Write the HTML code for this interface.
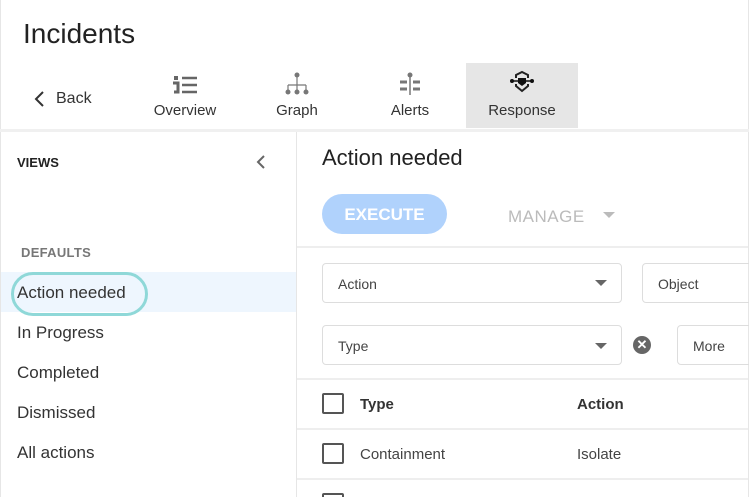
<!DOCTYPE html>
<html><head><style>
*{margin:0;padding:0;box-sizing:border-box}
html,body{width:749px;height:497px;overflow:hidden}
body{background:#fff;font-family:"Liberation Sans",sans-serif;color:#333;position:relative}
.a{position:absolute}
.tab{position:absolute;top:63px;height:65px;text-align:center;font-size:15px;color:#333}
.tab span{position:absolute;left:0;right:0;top:39px}
.box{position:absolute;border:1px solid #ddd;border-radius:4px;height:40px;font-size:14px;color:#444;padding:12px 15px}
.caret{position:absolute;width:0;height:0;border-left:6px solid transparent;border-right:6px solid transparent;border-top:6px solid #666}
.cb{position:absolute;width:22px;height:21px;border:2px solid #555;border-radius:2px}
.hl{position:absolute;left:297px;right:1px;height:2px;background:#eee}
.s{position:absolute;left:17px;font-size:17px;color:#333}
</style></head><body>
<div class="a" style="left:0;top:0;width:1px;height:497px;background:#e6e6e6"></div>
<div class="a" style="left:748px;top:0;width:1px;height:497px;background:#e6e6e6"></div>
<div class="a" style="left:23px;top:18px;font-size:28px;color:#222">Incidents</div>
<svg class="a" style="left:33px;top:91px" width="12" height="16"><path d="M10 1L3 8l7 7" stroke="#333" stroke-width="2" fill="none"/></svg>
<div class="a" style="left:56px;top:90px;font-size:16px;color:#333">Back</div>
<div class="tab" style="left:140px;width:90px"><svg style="margin-top:12px" width="28" height="20"><rect x="3" y="1" width="4" height="4" fill="#666"/><path d="M2 8h5v9h-4" stroke="#666" stroke-width="3" fill="none"/><path d="M11 3h15M11 10h15M11 17h15" stroke="#666" stroke-width="2.5"/></svg><span>Overview</span></div>
<div class="tab" style="left:252px;width:90px"><svg style="margin-top:8px" width="28" height="26"><circle cx="14" cy="4" r="2.5" fill="#777"/><path d="M14 6v8M5 14h18M5 14v5M14 14v5M23 14v5" stroke="#777" stroke-width="1.2" fill="none"/><circle cx="5" cy="21" r="2.5" fill="#777"/><circle cx="14" cy="21" r="2.5" fill="#777"/><circle cx="23" cy="21" r="2.5" fill="#777"/></svg><span>Graph</span></div>
<div class="tab" style="left:365px;width:90px"><svg style="margin-top:9px" width="28" height="24"><circle cx="14" cy="3" r="2.5" fill="#777"/><path d="M14 3v20" stroke="#777" stroke-width="1.5"/><path d="M4 10h7M4 17h7M17 10h7M17 17h7" stroke="#777" stroke-width="3"/></svg><span>Alerts</span></div>
<div class="tab" style="left:466px;width:112px;background:#e6e6e6"><svg style="margin-top:6px" width="30" height="28"><path d="M9 9V6l6-3 6 3v3M9 15v2l6 5 6-5v-2" stroke="#222" stroke-width="2" fill="none"/><path d="M11 9h8v5l-4 3-4-3z" fill="#111"/><circle cx="5" cy="12" r="2" fill="#111"/><circle cx="25" cy="12" r="2" fill="#111"/><path d="M5 12h6M19 12h6" stroke="#111" stroke-width="1.5"/></svg><span>Response</span></div>
<div class="a" style="left:0;top:129px;width:749px;height:3px;background:#f0f0f0"></div>
<div class="a" style="left:296px;top:132px;width:1px;height:365px;background:#e6e6e6"></div>
<div class="a" style="left:17px;top:155px;font-size:13px;font-weight:bold;color:#222">VIEWS</div>
<svg class="a" style="left:256px;top:155px" width="10" height="14"><path d="M8 1L2 7l6 6" stroke="#666" stroke-width="2" fill="none"/></svg>
<div class="a" style="left:21px;top:245px;font-size:13px;font-weight:bold;color:#777;letter-spacing:.3px">DEFAULTS</div>
<div class="a" style="left:1px;top:272px;width:295px;height:40px;background:#eef6fe"></div>
<div class="a" style="left:11px;top:272px;width:137px;height:44px;border:3px solid #8fd8d8;border-radius:22px"></div>
<div class="s" style="top:283px">Action needed</div>
<div class="s" style="top:323px">In Progress</div>
<div class="s" style="top:363px">Completed</div>
<div class="s" style="top:403px">Dismissed</div>
<div class="s" style="top:443px">All actions</div>
<div class="a" style="left:322px;top:145px;font-size:22px;color:#222">Action needed</div>
<div class="a" style="left:322px;top:194px;width:125px;height:40px;border-radius:20px;background:#b0d2fc;color:#fff;font-size:17px;font-weight:bold;text-align:center;line-height:41px">EXECUTE</div>
<div class="a" style="left:508px;top:207px;font-size:17px;color:#bbb;letter-spacing:.5px">MANAGE</div>
<div class="caret" style="left:603px;top:212px;border-top-color:#bbb"></div>
<div class="hl" style="top:246px"></div>
<div class="box" style="left:322px;top:263px;width:300px">Action</div>
<div class="caret" style="left:595px;top:280px"></div>
<div class="box" style="left:642px;top:263px;width:120px">Object</div>
<div class="box" style="left:322px;top:325px;width:300px">Type</div>
<div class="caret" style="left:595px;top:343px"></div>
<div class="a" style="left:633px;top:336px;width:18px;height:18px;border-radius:50%;background:#666;color:#fff;font-size:13px;font-weight:bold;text-align:center;line-height:18px">✕</div>
<div class="box" style="left:677px;top:325px;width:90px">More</div>
<div class="hl" style="top:378px"></div>
<div class="cb" style="left:322px;top:393px"></div>
<div class="a" style="left:360px;top:396px;font-size:15px;font-weight:bold;color:#333">Type</div>
<div class="a" style="left:577px;top:396px;font-size:15px;font-weight:bold;color:#333">Action</div>
<div class="hl" style="top:428px"></div>
<div class="cb" style="left:322px;top:443px"></div>
<div class="a" style="left:360px;top:446px;font-size:15px;color:#444">Containment</div>
<div class="a" style="left:577px;top:446px;font-size:15px;color:#444">Isolate</div>
<div class="hl" style="top:478px"></div>
<div class="cb" style="left:322px;top:493px"></div>
</body></html>
